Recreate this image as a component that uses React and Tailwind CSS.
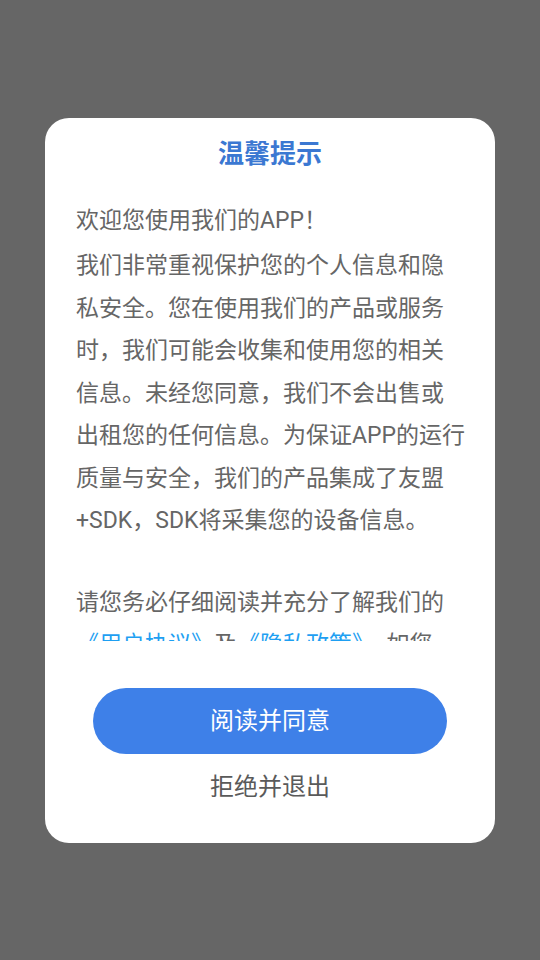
export default function App() {
  const font = { fontFamily: 'Roboto, "Noto Sans CJK SC", sans-serif' };
  const lines1 = [
    "我们非常重视保护您的个人信息和隐",
    "私安全。您在使用我们的产品或服务",
    "时，我们可能会收集和使用您的相关",
    "信息。未经您同意，我们不会出售或",
    "出租您的任何信息。为保证APP的运行",
    "质量与安全，我们的产品集成了友盟",
    "+SDK，SDK将采集您的设备信息。",
  ];
  return (
    <div
      className="w-full h-[960px] bg-[#666666] flex items-center justify-center"
      style={font}
    >
      <div className="w-[450px] bg-white rounded-[24px] flex flex-col items-center pt-[20px] pb-[39px]">
        <div className="h-[32px] leading-[32px] text-[26px] font-bold text-[#3b78d2]">
          温馨提示
        </div>
        <div className="mt-[30px] h-[441px] w-full overflow-hidden pl-[31px] pr-[20px] text-[23px] leading-[42.5px] text-[#666666]">
          <div className="whitespace-nowrap mb-[3px]">欢迎您使用我们的APP！</div>
          {lines1.map((l) => (
            <div key={l} className="whitespace-nowrap">
              {l}
            </div>
          ))}
          <div className="h-[39px]" />
          <div className="whitespace-nowrap">请您务必仔细阅读并充分了解我们的</div>
          <div className="whitespace-nowrap">
            <span className="text-[#1e9ff2]">《用户协议》</span>及
            <span className="text-[#1e9ff2]">《隐私政策》</span>，如您
          </div>
          <div className="whitespace-nowrap">同意，请点击“阅读并同意”开始使用</div>
          <div className="whitespace-nowrap">我们的产品和服务。</div>
        </div>
        <button className="mt-[47px] w-[354px] h-[66px] rounded-full bg-[#3e80e8] text-white text-[24px] leading-[66px]">
          阅读并同意
        </button>
        <div className="mt-[16px] h-[34px] leading-[34px] text-[24px] text-[#5a5a5a]">
          拒绝并退出
        </div>
      </div>
    </div>
  );
}
